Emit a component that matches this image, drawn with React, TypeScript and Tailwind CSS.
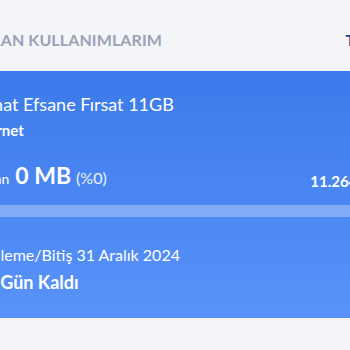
import React from "react";

const font = { fontFamily: "Lato, 'Open Sans', sans-serif" };

export default function App() {
  return (
    <div className="w-[350px] h-[350px] overflow-hidden bg-[#f4f5f8]" style={font}>
      <div className="w-[470px] -ml-[45px] pt-[28px]">
        {/* header */}
        <div className="flex items-center justify-between h-[24px] pl-[15px] pr-[20px]">
          <span className="text-[16px] font-bold text-[#9aa3b6] tracking-[0.1px]">KALAN KULLANIMLARIM</span>
          <span className="text-[16px] font-bold text-[#1d3b8c] mr-[11px]">TÜMÜ</span>
        </div>

        {/* card */}
        <div className="mt-[19px] h-[247px] bg-linear-to-b from-[#3b7aeb] to-[#5993f9] pl-[20px] pr-[40px] pt-[21px] text-white">
          <p className="text-[18px] leading-[24px] -ml-[2px]">Rahat Efsane Fırsat 11GB</p>
          <p className="mt-[4px] text-[15px] leading-[20px] font-bold -ml-[5px]">İnternet</p>

          <div className="mt-[21px] flex items-end justify-between">
            <div className="flex items-baseline">
              <span className="text-[14px]">Kalan</span>
              <span className="ml-[6px] text-[23px] font-bold leading-[28px]">0 MB</span>
              <span className="ml-[5px] text-[16px] text-white/90">(%0)</span>
            </div>
            <span className="text-[15px] font-bold mb-[-2px]">11.264 MB</span>
          </div>

          <div className="mt-[15px] h-[12px] rounded-full bg-white/30" />

          <p className="mt-[27px] text-[16px] leading-[22px] -ml-[4px]">Yenileme/Bitiş 31 Aralık 2024</p>
          <p className="mt-[4px] text-[18px] leading-[24px] font-bold">15 Gün Kaldı</p>
        </div>
      </div>
    </div>
  );
}
